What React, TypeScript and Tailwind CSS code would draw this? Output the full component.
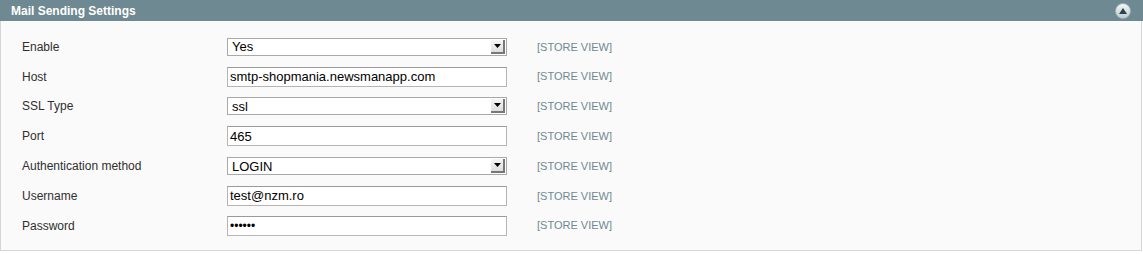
const rows: { label: string; type: 'select' | 'text' | 'password'; value: string }[] = [
  { label: 'Enable', type: 'select', value: 'Yes' },
  { label: 'Host', type: 'text', value: 'smtp-shopmania.newsmanapp.com' },
  { label: 'SSL Type', type: 'select', value: 'ssl' },
  { label: 'Port', type: 'text', value: '465' },
  { label: 'Authentication method', type: 'select', value: 'LOGIN' },
  { label: 'Username', type: 'text', value: 'test@nzm.ro' },
  { label: 'Password', type: 'password', value: '••••••' },
]

function FakeSelect({ value }: { value: string }) {
  return (
    <div className="flex h-[18px] w-[280px] items-center border border-[#a9a9a9] bg-white">
      <span className="flex-1 pl-[4px] text-[13px] leading-none text-black">{value}</span>
      <span className="mr-[1px] flex h-[14px] w-[14px] items-center justify-center border-r-2 border-b-2 border-[#777] bg-gradient-to-b from-[#f6f6f6] to-[#dedede]">
        <svg width="7" height="4" viewBox="0 0 7 4">
          <path d="M0 0h7L3.5 4z" fill="#000" />
        </svg>
      </span>
    </div>
  )
}

function FakeInput({ value, password }: { value: string; password?: boolean }) {
  return (
    <div className="flex h-[20px] w-[280px] items-center border border-[#b5b5b5] border-t-[#9a9a9a] bg-white pl-[2px]">
      <span
        className={
          password
            ? 'text-[12px] leading-none text-black'
            : 'text-[13px] leading-none text-black'
        }
      >
        {value}
      </span>
    </div>
  )
}

export default function App() {
  return (
    <div className="w-[1143px] font-['Liberation_Sans',Arial,sans-serif]">
      <div className="flex h-[21px] items-center justify-between bg-[#6f8992] pl-[11px] pr-[12px]">
        <h4 className="text-[12px] font-bold text-white">Mail Sending Settings</h4>
        <span className="flex h-[16px] w-[16px] items-center justify-center rounded-full border border-[#9fb1b7] bg-gradient-to-b from-[#f2f6f7] to-[#bfcdd1]">
          <svg width="8" height="6" viewBox="0 0 8 6">
            <path d="M4 0L8 6H0z" fill="#27434d" />
          </svg>
        </span>
      </div>
      <div className="mr-[1px] border-x border-b border-[#d6d6d6] bg-[#fafafa] pt-[11px] pb-[9px]">
        {rows.map((r) => (
          <div key={r.label} className="flex h-[29.8px] items-center">
            <div className="w-[226px] pl-[21px] text-[12px] text-[#2f2f2f]">{r.label}</div>
            {r.type === 'select' ? (
              <FakeSelect value={r.value} />
            ) : (
              <FakeInput value={r.value} password={r.type === 'password'} />
            )}
            <div className="pl-[30px] text-[11px] text-[#6f8992]">[STORE VIEW]</div>
          </div>
        ))}
      </div>
    </div>
  )
}
